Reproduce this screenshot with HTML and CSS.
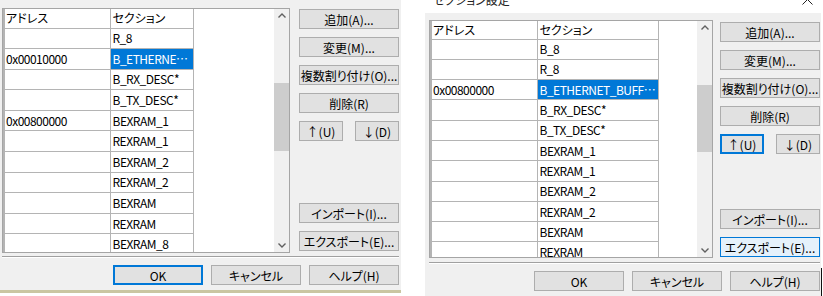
FILE: index.html
```html
<!DOCTYPE html>
<html lang="ja">
<head>
  <meta charset="UTF-8" />
  <meta name="viewport" content="width=device-width, initial-scale=1.0"/>
  <title>セクション設定</title>
  <link rel="stylesheet" href="styles.css">
</head>
<body>
  <div class="screens">

    <!-- before -->
    <div class="shot shot-old">
      <div class="dialog dialog-old">
        <div class="main">
          <div class="listbox">
            <div class="grid-wrap">
              <table class="grid grid-old">
                <colgroup><col class="col-addr"><col class="col-sec"></colgroup>
                <tr><th>アドレス</th><th>セクション</th></tr>
                <tr><td></td><td>R_8</td></tr>
                <tr><td>0x00010000</td><td class="selected">B_ETHERNET_BUFFER</td></tr>
                <tr><td></td><td>B_RX_DESC*</td></tr>
                <tr><td></td><td>B_TX_DESC*</td></tr>
                <tr><td>0x00800000</td><td>BEXRAM_1</td></tr>
                <tr><td></td><td>REXRAM_1</td></tr>
                <tr><td></td><td>BEXRAM_2</td></tr>
                <tr><td></td><td>REXRAM_2</td></tr>
                <tr><td></td><td>BEXRAM</td></tr>
                <tr><td></td><td>REXRAM</td></tr>
                <tr><td></td><td>BEXRAM_8</td></tr>
              </table>
            </div>
            <div class="vscroll">
              <span class="arrow"><svg width="8" height="5" viewBox="0 0 8 5"><path d="M0.5 4.5 L4 1 L7.5 4.5" fill="none" stroke="#606060" stroke-width="1.4"/></svg></span>
              <div class="track"><div class="thumb thumb-old"></div></div>
              <span class="arrow"><svg width="8" height="5" viewBox="0 0 8 5"><path d="M0.5 0.5 L4 4 L7.5 0.5" fill="none" stroke="#606060" stroke-width="1.4"/></svg></span>
            </div>
          </div>
          <div class="side side-old">
            <button class="btn">追加(A)...</button>
            <button class="btn">変更(M)...</button>
            <button class="btn">複数割り付け(O)...</button>
            <button class="btn">削除(R)</button>
            <div class="pair">
              <button class="btn">↑(U)</button>
              <button class="btn">↓(D)</button>
            </div>
            <div class="io">
              <button class="btn">インポート(I)...</button>
              <button class="btn">エクスポート(E)...</button>
            </div>
          </div>
        </div>
        <div class="sep"></div>
        <div class="footer">
          <button class="btn btn-default">OK</button>
          <button class="btn">キャンセル</button>
          <button class="btn">ヘルプ(H)</button>
        </div>
      </div>
    </div>

    <!-- after -->
    <div class="shot shot-new">
      <div class="titlebar">
        <span class="title">セクション設定</span>
        <svg class="close" width="11" height="11" viewBox="0 0 11 11"><path d="M0.5 0.5 L10.5 10.5 M10.5 0.5 L0.5 10.5" stroke="#222" stroke-width="1"/></svg>
      </div>
      <div class="dialog dialog-new">
        <div class="main">
          <div class="listbox">
            <div class="grid-wrap">
              <table class="grid grid-new">
                <colgroup><col class="col-addr"><col class="col-sec"></colgroup>
                <tr><th>アドレス</th><th>セクション</th></tr>
                <tr><td></td><td>B_8</td></tr>
                <tr><td></td><td>R_8</td></tr>
                <tr><td>0x00800000</td><td class="selected">B_ETHERNET_BUFFER</td></tr>
                <tr><td></td><td>B_RX_DESC*</td></tr>
                <tr><td></td><td>B_TX_DESC*</td></tr>
                <tr><td></td><td>BEXRAM_1</td></tr>
                <tr><td></td><td>REXRAM_1</td></tr>
                <tr><td></td><td>BEXRAM_2</td></tr>
                <tr><td></td><td>REXRAM_2</td></tr>
                <tr><td></td><td>BEXRAM</td></tr>
                <tr><td></td><td>REXRAM</td></tr>
              </table>
            </div>
            <div class="vscroll">
              <span class="arrow"><svg width="8" height="5" viewBox="0 0 8 5"><path d="M0.5 4.5 L4 1 L7.5 4.5" fill="none" stroke="#606060" stroke-width="1.4"/></svg></span>
              <div class="track"><div class="thumb thumb-new"></div></div>
              <span class="arrow"><svg width="8" height="5" viewBox="0 0 8 5"><path d="M0.5 0.5 L4 4 L7.5 0.5" fill="none" stroke="#606060" stroke-width="1.4"/></svg></span>
            </div>
          </div>
          <div class="side side-new">
            <button class="btn">追加(A)...</button>
            <button class="btn">変更(M)...</button>
            <button class="btn">複数割り付け(O)...</button>
            <button class="btn">削除(R)</button>
            <div class="pair">
              <button class="btn btn-focus">↑(U)</button>
              <button class="btn">↓(D)</button>
            </div>
            <div class="io">
              <button class="btn">インポート(I)...</button>
              <button class="btn btn-hover">エクスポート(E)...</button>
            </div>
          </div>
        </div>
        <div class="sep"></div>
        <div class="footer">
          <button class="btn">OK</button>
          <button class="btn">キャンセル</button>
          <button class="btn">ヘルプ(H)</button>
        </div>
      </div>
    </div>

  </div>
</body>
</html>
```

FILE: styles.css
```css
* {
  box-sizing: border-box;
}

body {
  margin: 0;
  width: 823px;
  height: 296px;
  overflow: hidden;
  background: #fff;
  color: #000;
  font-family: "Noto Sans CJK JP", "Noto Sans", sans-serif;
  font-size: 12px;
  font-feature-settings: "palt";
}

.screens {
  display: flex;
  align-items: flex-start;
}

/* dialog frames */
.dialog {
  display: flex;
  flex-direction: column;
  background: #f0f0f0;
}

.dialog-old {
  width: 401px;
  height: 293px;
  padding: 8px 2px 0 2px;
  border-bottom: 3px solid #cac6a2;
}

.shot-new {
  margin-left: 24px;
}

.titlebar {
  display: flex;
  justify-content: space-between;
  height: 13px;
  padding: 0 8px;
  line-height: 12px;
}

.title {
  margin-top: -6px;
  color: #222;
}

.close {
  margin-top: -6px;
}

.dialog-new {
  position: relative;
  width: 396px;
  height: 283px;
  padding: 7px 1px 0 4px;
}

.dialog-new::after {
  content: "";
  position: absolute;
  right: -1px;
  top: 255px;
  width: 1px;
  height: 30px;
  background: #111;
}

.main {
  display: flex;
}

.dialog-old .main {
  height: 245px;
}

.dialog-new .main {
  height: 238px;
}

/* list */
.listbox {
  display: flex;
  height: 100%;
  border: 1px solid #a5a5a5;
  background: #fff;
  overflow: hidden;
}

.dialog-old .listbox {
  width: 288px;
}

.dialog-new .listbox {
  width: 284px;
}

.grid-wrap {
  flex: 1;
  overflow: hidden;
}

.grid {
  border-collapse: collapse;
  table-layout: fixed;
}

.grid-old {
  width: 191px;
}

.grid-new {
  width: 229px;
}

.grid th,
.grid td {
  padding: 0 2px;
  border: 1px solid #b4b4b4;
  font-weight: normal;
  text-align: left;
  line-height: 14px;
  letter-spacing: -0.5px;
  white-space: nowrap;
  overflow: hidden;
  text-overflow: ellipsis;
}

.grid th {
  letter-spacing: 0;
}

.grid-old td {
  height: 20.6px;
}

.grid-old th {
  height: 19px;
}

.grid-new td {
  height: 20.3px;
}

.grid-new th {
  height: 18px;
}

.grid th {
  border-top: none;
}

.grid tr > :first-child {
  border-left: 2px solid #b4b4b4;
  padding-left: 1px;
}

.col-addr {
  width: 106px;
}

.grid td.selected {
  background: #0078d7;
  color: #fff;
}

/* scrollbar */
.vscroll {
  display: flex;
  flex-direction: column;
  width: 15px;
  background: #f0f0f0;
}

.arrow {
  display: flex;
  align-items: center;
  justify-content: center;
  height: 13px;
}

.track {
  flex: 1;
}

.thumb {
  background: #cdcdcd;
}

.thumb-old {
  margin-top: 61px;
  height: 68px;
}

.thumb-new {
  margin-top: 51px;
  height: 67px;
}

/* buttons */
.btn {
  height: 20px;
  padding: 0;
  border: 1px solid #adadad;
  background: #e1e1e1;
  color: #000;
  font: inherit;
  white-space: nowrap;
}

.btn-default,
.btn-focus {
  border-color: #0078d7;
  box-shadow: inset 0 0 0 1px #0078d7;
}

.btn-hover {
  background: #e5f1fb;
  border-color: #0078d7;
}

.side {
  display: flex;
  flex-direction: column;
  gap: 8px;
  width: 100px;
}

.side-old {
  margin-left: 9px;
  padding: 1px 0 2px;
}

.side-new {
  margin-left: 7px;
  padding: 2px 0 1px;
}

.pair {
  display: flex;
  justify-content: space-between;
}

.pair .btn {
  width: 44px;
}

.io {
  display: flex;
  flex-direction: column;
  gap: 8px;
  margin-top: auto;
}

.sep {
  height: 2px;
  border-top: 1px solid #a0a0a0;
  border-bottom: 1px solid #fff;
}

.dialog-old .sep {
  margin-top: 3px;
}

.dialog-new .sep {
  margin-top: 4px;
}

.footer {
  display: flex;
  justify-content: flex-end;
  gap: 8px;
  margin-top: 7px;
}

.footer .btn {
  width: 90px;
}
```
